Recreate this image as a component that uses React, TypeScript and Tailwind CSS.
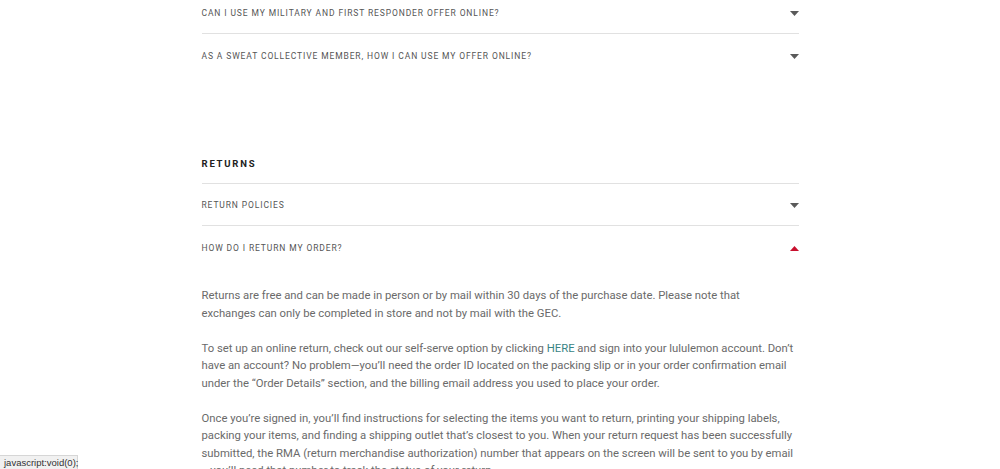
import React from 'react';

const Caret = ({ open = false }: { open?: boolean }) => (
  <svg width="9" height="5" viewBox="0 0 9 5" className={open ? 'text-[#c8102e]' : 'text-[#5a5a5a]'}>
    {open ? <path d="M0 5 L4.5 0 L9 5 Z" fill="currentColor" /> : <path d="M0 0 L9 0 L4.5 5 Z" fill="currentColor" />}
  </svg>
);

const Row = ({ title, open = false, border = true }: { title: string; open?: boolean; border?: boolean }) => (
  <div className={`flex h-[42px] items-center justify-between pt-[2px] ${border ? 'border-b border-[#e1e1e1]' : ''}`}>
    <span className="text-[8.5px] uppercase tracking-[0.88px] text-[#555]">{title}</span>
    <Caret open={open} />
  </div>
);

export default function App() {
  return (
    <div className="relative h-[469px] overflow-hidden bg-white font-['Roboto',sans-serif]">
      <div className="mx-auto -mt-[8px] w-[597px]">
        <Row title="Can I use my military and first responder offer online?" />
        <Row title="As a Sweat Collective member, how I can use my offer online?" border={false} />

        <h2 className="mt-[81px] mb-[12px] text-[9.5px] font-bold leading-[14px] tracking-[1.8px] text-[#222]">RETURNS</h2>
        <div className="border-t border-[#e1e1e1]">
          <Row title="Return policies" />
          <Row title="How do I return my order?" open border={false} />
        </div>

        <div className="pt-[19px] text-[11.3px] leading-[17.5px] text-[#6a6a6a] whitespace-nowrap">
          <p>
            Returns are free and can be made in person or by mail within 30 days of the purchase date. Please note that
            <br />
            exchanges can only be completed in store and not by mail with the GEC.
          </p>
          <p className="mt-[17.5px]">
            To set up an online return, check out our self-serve option by clicking{' '}
            <a href="#" className="text-[#3a8484]">HERE</a> and sign into your lululemon account. Don’t
            <br />
            have an account? No problem—you’ll need the order ID located on the packing slip or in your order confirmation email
            <br />
            under the “Order Details” section, and the billing email address you used to place your order.
          </p>
          <p className="mt-[17.5px]">
            Once you’re signed in, you’ll find instructions for selecting the items you want to return, printing your shipping labels,
            <br />
            packing your items, and finding a shipping outlet that’s closest to you. When your return request has been successfully
            <br />
            submitted, the RMA (return merchandise authorization) number that appears on the screen will be sent to you by email
            <br />
            —you’ll need that number to track the status of your return.
          </p>
        </div>
      </div>

      <div className="absolute bottom-0 left-0 h-[14px] w-[78px] border-t border-r border-[#d6d6d6] bg-[#f1f1f1] pl-[4px] text-[9.5px] leading-[13px] text-[#333] font-['Liberation_Sans',sans-serif]">
        javascript:void(0);
      </div>
    </div>
  );
}
